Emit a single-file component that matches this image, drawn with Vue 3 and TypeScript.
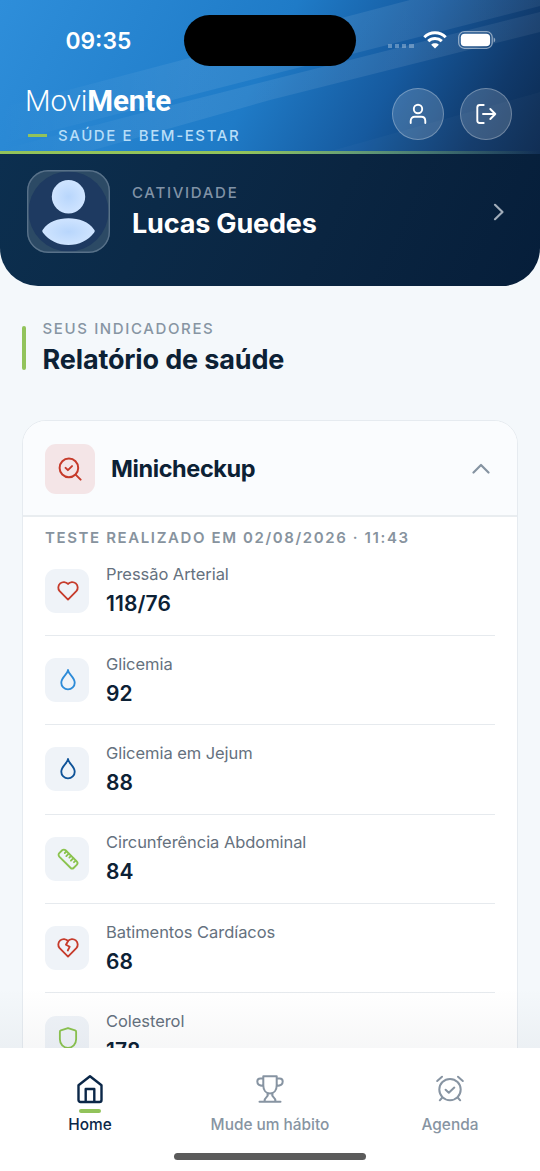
<script setup lang="ts">
type IconName = 'heart' | 'drop' | 'ruler' | 'broken' | 'shield'

interface Metric {
  label: string
  value: string
  icon: IconName
  tone: string
}

const metrics: Metric[] = [
  { label: 'Pressão Arterial', value: '118/76', icon: 'heart', tone: 'red' },
  { label: 'Glicemia', value: '92', icon: 'drop', tone: 'sky' },
  { label: 'Glicemia em Jejum', value: '88', icon: 'drop', tone: 'navy' },
  { label: 'Circunferência Abdominal', value: '84', icon: 'ruler', tone: 'green' },
  { label: 'Batimentos Cardíacos', value: '68', icon: 'broken', tone: 'red' },
  { label: 'Colesterol', value: '178', icon: 'shield', tone: 'green' },
]

const heart = 'M19.700 12.200 12 19.900l-7.700-7.700A4.600 4.600 0 0 1 12 5.500a4.600 4.600 0 0 1 7.700 6.700Z'

const paths: Record<IconName, string[]> = {
  heart: [heart],
  drop: ['M12 2.800c.3 4 6.200 6.500 6.200 11.700a6.200 6.200 0 0 1-12.400 0c0-5.200 5.900-7.700 6.200-11.700Z'],
  ruler: [
    'M4.700 7.900H19.300a2.200 2.200 0 0 1 2.200 2.200V13.900a2.200 2.200 0 0 1-2.200 2.200H4.700A2.200 2.200 0 0 1 2.500 13.900V10.100a2.200 2.200 0 0 1 2.200-2.200Z',
    'M6 8v2.200M9 8v3.200M12 8v2.200M15 8v3.200M18 8v2.200',
  ],
  broken: [heart, 'm12 5.700-1.900 3.300 3.500 1.800-1.800 3.500'],
  shield: ['M12 2.800 18.600 5c.6.2.9.6.9 1.300V13.200c0 4.400-3.300 7.900-7.500 7.900s-7.500-3.500-7.500-7.900V6.300c0-.7.3-1.100.9-1.300L12 2.800Z'],
}
</script>

<template>
  <div class="screen">
    <header class="hero">
      <svg class="rays" viewBox="0 0 540 154" preserveAspectRatio="none">
        <defs>
          <linearGradient id="beam" gradientUnits="userSpaceOnUse" x1="0" y1="0" x2="540" y2="0">
            <stop offset="0" stop-color="#fff" stop-opacity="0" />
            <stop offset=".35" stop-color="#fff" stop-opacity=".075" />
            <stop offset=".75" stop-color="#fff" stop-opacity=".085" />
            <stop offset="1" stop-color="#fff" stop-opacity=".06" />
          </linearGradient>
        </defs>
        <g fill="url(#beam)">
          <path d="M0 108 410 0H540V6L180 98 0 144Z" />
          <path d="M0 150 180 103 540 12V32L270 100 90 151H0Z" />
        </g>
        <path class="faint" d="M345 147 540 92V154H320Z" />
      </svg>
      <div class="status">
        <span class="clock">09:35</span>
        <span class="island"></span>
        <div class="signals">
          <span class="dots"><i v-for="n in 4" :key="n"></i></span>
          <svg class="wifi" width="24" height="18" viewBox="0 0 24 18">
            <g fill="none" stroke="#fff" stroke-width="3">
              <path d="M1.300 6.200C7.200.400 16.800.400 22.700 6.200" />
              <path d="M5.200 10.200c3.800-3.600 9.800-3.600 13.600 0" />
            </g>
            <path fill="#fff" d="M12 17.600 8.200 13.700c2-1.900 5.600-1.900 7.600 0Z" />
          </svg>
          <svg class="battery" width="38" height="18" viewBox="0 0 38 18">
            <rect x=".7" y=".7" width="33.500" height="16.600" rx="5.600" fill="none" stroke="#fff" stroke-opacity=".5" stroke-width="1.300" />
            <rect x="2.800" y="2.700" width="29.300" height="12.500" rx="3.800" fill="#fff" />
            <path d="M35.700 6.500c2 .8 2 4.200 0 5Z" fill="#fff" opacity=".5" />
          </svg>
        </div>
      </div>
      <div class="brandbar">
        <div class="brand">
          <div class="logo">Movi<b>Mente</b></div>
          <div class="tagline"><i></i><span>SAÚDE E BEM-ESTAR</span></div>
        </div>
        <div class="actions">
          <button class="round" aria-label="Perfil">
            <svg width="22" height="22" viewBox="0 0 22 22">
              <circle cx="11" cy="6" r="4.200" />
              <path d="M3.700 20v-2.100c0-2.500 1.700-4.200 4.100-4.200h6.400c2.400 0 4.100 1.700 4.100 4.200V20" />
            </svg>
          </button>
          <button class="round" aria-label="Sair">
            <svg width="22" height="22" viewBox="0 0 22 22">
              <path d="M8.700 2H4.800C3.200 2 2.300 2.900 2.300 4.500v13c0 1.600.9 2.500 2.500 2.500h3.900M8 11h12.300M15.300 6l5 5-5 5" />
            </svg>
          </button>
        </div>
      </div>
      <div class="hairline"></div>
    </header>

    <section class="profile">
      <svg class="avatar" width="83" height="83" viewBox="0 0 83 83">
        <defs>
          <clipPath id="tile"><rect width="83" height="83" rx="21" /></clipPath>
          <radialGradient id="skin"><stop offset="0" stop-color="#b8d6fc" /><stop offset="1" stop-color="#cfe4ff" /></radialGradient>
        </defs>
        <g clip-path="url(#tile)">
          <rect width="83" height="83" fill="#2c4a65" />
          <circle cx="41.500" cy="41.500" r="40" fill="#1e3a61" />
          <circle cx="41.500" cy="26.700" r="16.700" fill="url(#skin)" />
          <path d="M16 59.500C21 52 31 48.300 41.500 48.300S62 52 67 59.500c1 1.200 1 2 0 3.200C61 70.500 52 75 41.500 75S22 70.500 16 62.700c-1-1.200-1-2 0-3.200Z" fill="url(#skin)" />
        </g>
        <rect x=".7" y=".7" width="81.600" height="81.600" rx="20.500" fill="none" stroke="#587189" stroke-width="1.400" />
      </svg>
      <div class="who">
        <span class="eyebrow">CATIVIDADE</span>
        <strong>Lucas Guedes</strong>
      </div>
      <svg class="next" width="12" height="18" viewBox="0 0 12 18"><path d="m2 1.800 7.500 7.200L2 16.200" /></svg>
    </section>

    <main>
      <div class="heading">
        <i></i>
        <div>
          <span class="eyebrow">SEUS INDICADORES</span>
          <h1>Relatório de saúde</h1>
        </div>
      </div>

      <article class="card">
        <div class="cardhead">
          <span class="checkicon">
            <svg width="24" height="24" viewBox="0 0 24 24">
              <circle cx="10.900" cy="10.900" r="9.300" /><path d="m17.600 17.600 5 5M7.600 10.900l2.300 2.200 4.100-4" />
            </svg>
          </span>
          <h2>Minicheckup</h2>
          <svg class="up" width="18" height="11" viewBox="0 0 18 11"><path d="m1.500 9.500 7.500-7.500 7.500 7.500" /></svg>
        </div>
        <div class="cardbody">
          <div class="stamp">TESTE REALIZADO EM 02/08/2026 · 11:43</div>
          <div v-for="m in metrics" :key="m.label" class="metric">
            <span class="tile" :class="m.tone">
              <svg width="26" height="26" viewBox="0 0 24 24">
                <g :transform="m.icon === 'ruler' ? 'rotate(45 12 12)' : undefined">
                  <path v-for="d in paths[m.icon]" :key="d" :d="d" />
                </g>
              </svg>
            </span>
            <div class="reading">
              <span>{{ m.label }}</span>
              <strong>{{ m.value }}</strong>
            </div>
          </div>
        </div>
      </article>
    </main>

    <div class="fade"></div>
    <nav>
      <a class="tab active">
        <svg width="30" height="30" viewBox="0 0 30 30">
          <path d="M3.500 11.200 15 2.200l11.500 9v14.800c0 1.200-.8 2-2 2H5.500c-1.200 0-2-.8-2-2ZM10.700 28V15h8.600v13" />
        </svg>
        <i></i>
        <span>Home</span>
      </a>
      <a class="tab">
        <svg width="30" height="30" viewBox="0 0 30 30">
          <path d="M8.300 2.200h13.400v9c0 5-2.700 8.300-6.700 8.300s-6.700-3.300-6.700-8.300ZM8.300 4.500H5.300C3.300 4.500 2.300 5.800 2.300 7.600c0 2.700 2 4.300 6 4.300M21.700 4.500h3c2 0 3 1.300 3 3.100 0 2.700-2 4.300-6 4.300M12.300 19.200c.8 1.400.4 3-.9 4-1.300 1-1.900 2-1.900 4.400M17.700 19.200c-.8 1.400-.4 3 .9 4 1.300 1 1.900 2 1.900 4.400M4.500 27.800h21" />
        </svg>
        <i></i>
        <span>Mude um hábito</span>
      </a>
      <a class="tab">
        <svg width="30" height="30" viewBox="0 0 30 30">
          <circle cx="15" cy="15.600" r="10.700" />
          <path d="m10.600 15.800 3.200 3 5.500-5.200M2.200 7l4.800-4.300M27.800 7 23 2.700M7.300 23.500l-2.500 2.800M22.700 23.500l2.500 2.800" />
        </svg>
        <i></i>
        <span>Agenda</span>
      </a>
      <div class="homebar"></div>
    </nav>
  </div>
</template>

<style>
body { background: #f4f8fb; }
</style>

<style scoped>
.screen {
  position: relative;
  width: 540px;
  height: 1171px;
  overflow: hidden;
  background: #f4f8fb;
  font-family: Inter, "Liberation Sans", sans-serif;
  color: #0c2135;
}
.screen * { box-sizing: border-box; }
svg { display: block; flex: none; }
.hero {
  position: relative;
  height: 154px;
  background: linear-gradient(118deg, #2e8eda 0%, #1f7bc7 48%, #165a9f 70%, #10396a 88%, #0c2a50 100%);
}
.rays { position: absolute; inset: 0; width: 540px; height: 154px; }
.rays .faint { fill: #fff; fill-opacity: .025; }
.status {
  position: relative;
  height: 80px;
  display: grid;
  grid-template-columns: 184px 172px 1fr;
  align-items: center;
}
.clock { padding-left: 65.500px; padding-top: 1px; color: #fff; font-size: 22.800px; font-weight: 600; }
.island { height: 51px; border-radius: 26px; background: #000; margin-top: 1px; }
.signals { display: flex; align-items: center; padding-left: 31.500px; }
.dots { display: flex; gap: 3px; padding-top: 12px; }
.dots i { width: 4.300px; height: 4.300px; background: rgba(255, 255, 255, .3); }
.wifi { margin-left: 9.500px; }
.battery { margin-left: 10.500px; }
.brandbar {
  position: relative;
  display: flex;
  justify-content: space-between;
  padding: 5px 28px 0 25px;
  height: 71px;
}
.logo { margin-top: -1px; font: 300 29.500px/34px Roboto, sans-serif; letter-spacing: -.1px; color: #fff; }
.logo b { font-weight: 700; }
.tagline { display: flex; align-items: center; margin-top: 7px; height: 20px; padding-left: 3px; }
.tagline i { width: 19px; height: 3px; background: #92c35b; margin-right: 11px; }
.tagline span { color: #b8def8; font-size: 15px; font-weight: 500; letter-spacing: 1.600px; }
.actions { display: flex; gap: 16.500px; padding-top: 3px; }
.round {
  width: 52px;
  height: 52px;
  display: grid;
  place-items: center;
  padding: 0;
  border: 1.500px solid rgba(255, 255, 255, .28);
  border-radius: 50%;
  background: rgba(255, 255, 255, .16);
}
.round svg { fill: none; stroke: #fff; stroke-width: 1.900; stroke-linecap: round; stroke-linejoin: round; }
.hairline { position: relative; height: 3px; background: linear-gradient(90deg, #92c35b 0%, #92c35b 45%, rgba(146, 195, 91, 0) 100%); }
.profile {
  height: 132px;
  display: flex;
  align-items: flex-start;
  padding: 16px 36px 0 27px;
  border-radius: 0 0 38px 38px;
  background: linear-gradient(115deg, #0c2f4f, #0a2541 60%, #061e3a);
}
.who { flex: 1; padding: 14px 0 0 22px; }
.eyebrow { display: block; font-size: 15px; line-height: 18px; font-weight: 500; letter-spacing: 1.620px; color: #8795a3; }
.who .eyebrow { color: #8193a6; letter-spacing: 1.700px; }
.who strong { display: block; margin-top: 6px; font-size: 27px; line-height: 32px; font-weight: 700; letter-spacing: -.180px; color: #fff; }
.next { margin-top: 33px; margin-right: -1px; fill: none; stroke: #a1adba; stroke-width: 2.200; stroke-linecap: round; stroke-linejoin: round; }
main { padding: 34px 22px 0; }
.heading { display: flex; gap: 16.500px; }
.heading i { width: 4px; height: 44px; border-radius: 2px; background: #92c35b; margin-top: 6px; }
h1 { margin: 5px 0 0; font-size: 27px; line-height: 34px; font-weight: 700; letter-spacing: -.140px; }
.card { margin-top: 43px; height: 700px; border: 1.500px solid #e6ebf0; border-radius: 24px; background: #fff; overflow: hidden; }
.cardhead { display: flex; align-items: center; height: 96px; padding: 2px 27px 0 22px; background: #fafcfe; border-bottom: 2px solid #e9edf0; }
.checkicon { width: 50px; height: 50px; border-radius: 11px; background: #f4e5e7; display: grid; place-items: center; }
.checkicon svg { fill: none; stroke: #c63b2b; stroke-width: 2; stroke-linecap: round; stroke-linejoin: round; }
h2 { flex: 1; margin: 0 0 0 16px; font-size: 23.500px; line-height: 30px; font-weight: 700; letter-spacing: -.4px; }
.up { margin-bottom: 2px; fill: none; stroke: #8593a1; stroke-width: 2.200; stroke-linecap: round; stroke-linejoin: round; }
.cardbody { padding: 0 22px; }
.stamp { height: 29.500px; padding-top: 11px; font-size: 15px; line-height: 19px; font-weight: 600; letter-spacing: 1.610px; color: #87939e; white-space: nowrap; }
.metric { display: flex; align-items: center; height: 89.400px; border-bottom: 1.500px solid #e6eaee; }
.tile { width: 44px; height: 44px; border-radius: 11px; background: #eff3f8; display: grid; place-items: center; }
.tile svg { margin-left: 1px; fill: none; stroke: currentColor; stroke-width: 1.700; stroke-linecap: round; stroke-linejoin: round; }
.red { color: #c63b2b; }
.sky { color: #2d8bd8; }
.navy { color: #0f5398; }
.green { color: #8bc34f; }
.reading { padding-left: 17px; margin-top: -1px; }
.reading span { display: block; font-size: 16.500px; line-height: 22px; letter-spacing: -.060px; color: #65717e; }
.reading strong { display: block; margin-top: 6px; font-size: 21px; line-height: 26px; font-weight: 600; letter-spacing: .1px; }
.fade { position: absolute; left: 0; right: 0; top: 988px; height: 60px; background: linear-gradient(rgba(15, 30, 50, 0), rgba(15, 30, 50, .035)); }
nav { position: absolute; left: 0; right: 0; top: 1048px; height: 123px; display: grid; grid-template-columns: repeat(3, 1fr); background: #fff; }
.tab { display: flex; flex-direction: column; align-items: center; padding-top: 26px; color: #8794a2; font-size: 15.400px; line-height: 20px; font-weight: 500; }
.tab svg { fill: none; stroke: currentColor; stroke-width: 2; stroke-linecap: round; stroke-linejoin: round; }
.tab i { width: 22px; height: 4px; border-radius: 2px; margin: 5px 0 2px; }
.tab.active { color: #0b2748; }
.tab.active svg { stroke-width: 2.400; }
.tab.active i { background: #92c35b; }
.homebar { position: absolute; left: 174px; top: 105px; width: 192px; height: 7px; border-radius: 4px; background: #5b5b5b; }
</style>
